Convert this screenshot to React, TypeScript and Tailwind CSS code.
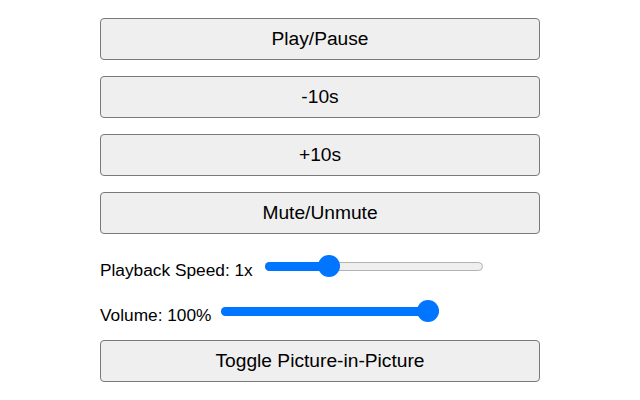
import React from 'react';

const font = { fontFamily: '"Liberation Sans", Arial, sans-serif' };

const Btn = ({ label, className = '' }: { label: string; className?: string }) => (
    <button className={`h-[42px] w-[440px] rounded-[4px] border-[1.5px] border-[#7a7a7a] bg-[#efefef] text-[19.2px] text-black ${className}`}>
        {label}
    </button>
);

const Slider = ({ pos, className = '' }: { pos: number; className?: string }) => (
    // pos = thumb centre offset from left of track, px
    <div className={`relative h-[22px] w-[218px] ${className}`}>
        <div className="absolute left-0 right-0 top-[6.5px] h-[9px] rounded-full border border-[#b2b2b2] bg-[#efefef]" />
        <div className="absolute left-0 top-[6.5px] h-[9px] rounded-full bg-[#0075ff]" style={{ width: pos }} />
        <div className="absolute top-0 h-[22px] w-[22px] rounded-full bg-[#0075ff]" style={{ left: pos - 11 }} />
    </div>
);

export default function App() {
    return (
        <div className="flex min-h-[400px] w-[640px] flex-col items-center bg-white pt-[18px]" style={font}>
            <div className="flex w-[440px] flex-col">
                <Btn label="Play/Pause" />
                <Btn label="-10s" className="mt-4" />
                <Btn label="+10s" className="mt-4" />
                <Btn label="Mute/Unmute" className="mt-4" />

                <div className="mt-[21px] flex items-end">
                    <span className="text-[17.3px] leading-[20px] text-black">Playback Speed: 1x</span>
                    <Slider pos={64} className="mb-[3px] ml-[12px]" />
                </div>

                <div className="mt-[20px] flex items-end">
                    <span className="text-[17.3px] leading-[20px] text-black">Volume: 100%</span>
                    <Slider pos={207} className="mb-[3px] ml-[9.5px]" />
                </div>

                <Btn label="Toggle Picture-in-Picture" className="mt-[15px]" />
            </div>
        </div>
    );
}
